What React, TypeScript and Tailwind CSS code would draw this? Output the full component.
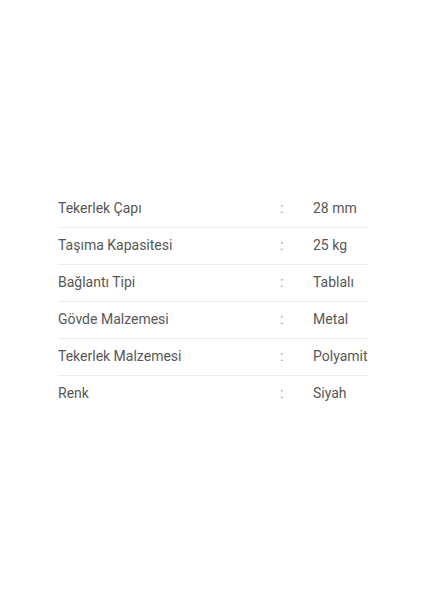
import React from 'react';

const rows = [
  { label: 'Tekerlek Çapı', value: '28 mm' },
  { label: 'Taşıma Kapasitesi', value: '25 kg' },
  { label: 'Bağlantı Tipi', value: 'Tablalı' },
  { label: 'Gövde Malzemesi', value: 'Metal' },
  { label: 'Tekerlek Malzemesi', value: 'Polyamit' },
  { label: 'Renk', value: 'Siyah' },
];

export default function App() {
  return (
    <div
      className="min-h-[600px] w-[424px] bg-white pt-[191px] pl-[58px]"
      style={{ fontFamily: 'Roboto, "Liberation Sans", sans-serif' }}
    >
      <div className="w-[310px]">
        {rows.map(({ label, value }, i) => (
          <div
            key={label}
            className={`flex h-[37px] items-center pb-[2px] text-[14px] text-[#575757] ${
              i < rows.length - 1 ? 'border-b border-[#ededed]' : ''
            }`}
          >
            <span className="w-[222px] shrink-0">{label}</span>
            <span className="w-[33px] shrink-0 text-[#999]">:</span>
            <span className="whitespace-nowrap">{value}</span>
          </div>
        ))}
      </div>
    </div>
  );
}
